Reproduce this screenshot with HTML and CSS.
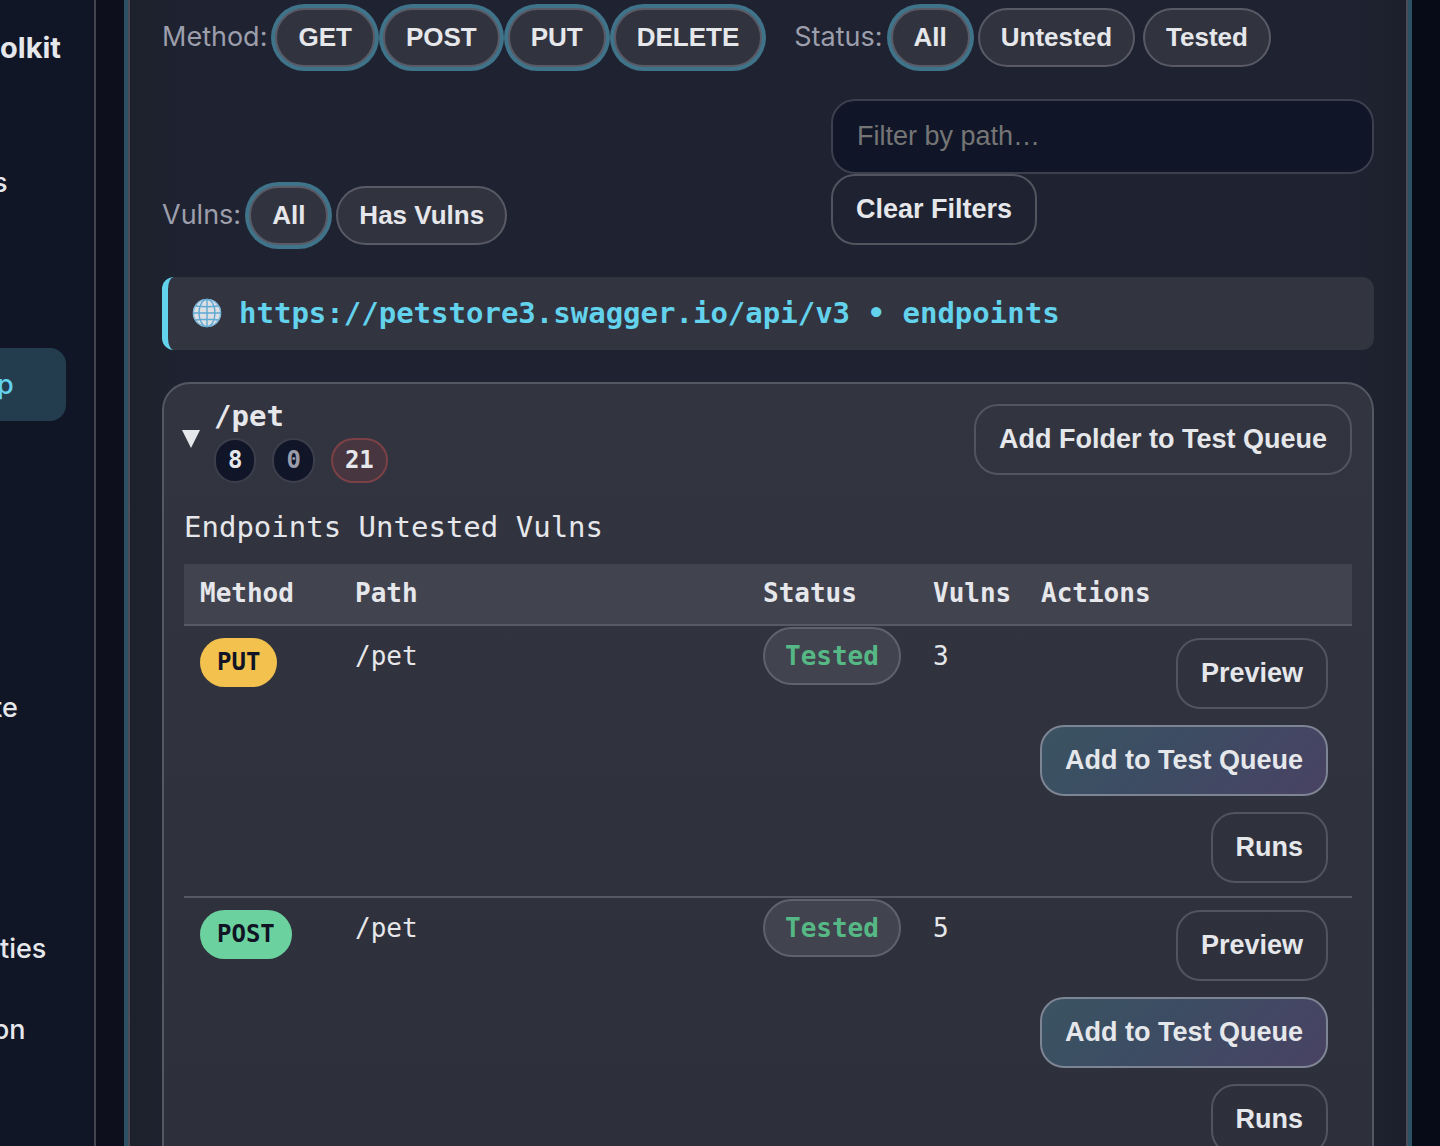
FILE: index.html
```html
<!DOCTYPE html>
<html lang="en">
<head>
<meta charset="utf-8">
<meta name="viewport" content="width=device-width, initial-scale=1">
<title>Endpoints</title>
<link rel="stylesheet" href="styles.css">
</head>
<body>
<div class="shell">
  <nav class="sidebar">
    <div class="brand">olkit</div>
    <div class="nav-group nav-group-first"><a class="nav-link clipped" href="#">s</a></div>
    <div class="nav-group nav-group-second"><a class="nav-link active" href="#">p</a></div>
    <div class="nav-group nav-group-third"><a class="nav-link clipped" href="#">te</a></div>
    <div class="nav-group nav-group-fourth">
      <a class="nav-link" href="#">ties</a>
      <a class="nav-link clipped" href="#">on</a>
    </div>
  </nav>

  <main class="main">
    <section class="panel">
      <div class="filters">
        <div class="filter-group">
          <span class="label">Method:</span>
          <button class="pill selected" type="button">GET</button>
          <button class="pill selected" type="button">POST</button>
          <button class="pill selected" type="button">PUT</button>
          <button class="pill selected" type="button">DELETE</button>
        </div>
        <div class="filter-group filter-status">
          <span class="label">Status:</span>
          <button class="pill selected" type="button">All</button>
          <button class="pill" type="button">Untested</button>
          <button class="pill" type="button">Tested</button>
        </div>
        <div class="filter-group">
          <span class="label">Vulns:</span>
          <button class="pill selected" type="button">All</button>
          <button class="pill" type="button">Has Vulns</button>
        </div>
        <div class="search">
          <input class="search-input" type="text" placeholder="Filter by path…" aria-label="Filter by path">
          <button class="btn" type="button">Clear Filters</button>
        </div>
      </div>

      <div class="host">
        <svg class="globe" viewBox="0 0 30 30" aria-hidden="true">
          <circle cx="15" cy="15" r="14" fill="#dcdfe3"/>
          <g fill="none" stroke="#5fa9d3" stroke-width="1.4">
            <circle cx="15" cy="15" r="13.6" stroke="#7db9dc"/>
            <ellipse cx="15" cy="15" rx="8" ry="13.6"/>
            <path d="M15 1v28M1 15h28M3.500 8Q15 9.500 26.500 8M3.500 22Q15 20.500 26.500 22"/>
          </g>
        </svg>
        <span>https://petstore3.swagger.io/api/v3 • endpoints</span>
      </div>

      <section class="folder">
        <header class="folder-head">
          <button class="toggle" type="button" aria-label="Collapse folder"><svg viewBox="0 0 18 18" aria-hidden="true"><path d="M0 0h18L9 18z" fill="#e6e7eb"/></svg></button>
          <div class="folder-info">
            <h2 class="folder-title">/pet</h2>
            <div class="counts">
              <span class="count">8</span>
              <span class="count muted">0</span>
              <span class="count danger">21</span>
            </div>
          </div>
          <button class="btn" type="button">Add Folder to Test Queue</button>
        </header>
        <p class="legend">Endpoints Untested Vulns</p>
        <table class="endpoints">
          <colgroup><col class="col-method"><col><col class="col-status"><col class="col-vulns"><col class="col-actions"></colgroup>
          <thead>
            <tr><th>Method</th><th>Path</th><th>Status</th><th>Vulns</th><th>Actions</th></tr>
          </thead>
          <tbody>
            <tr>
              <td><span class="method put">PUT</span></td>
              <td>/pet</td>
              <td><span class="status">Tested</span></td>
              <td>3</td>
              <td><div class="actions">
                <button class="btn" type="button">Preview</button>
                <button class="btn primary" type="button">Add to Test Queue</button>
                <button class="btn" type="button">Runs</button>
              </div></td>
            </tr>
            <tr>
              <td><span class="method post">POST</span></td>
              <td>/pet</td>
              <td><span class="status">Tested</span></td>
              <td>5</td>
              <td><div class="actions">
                <button class="btn" type="button">Preview</button>
                <button class="btn primary" type="button">Add to Test Queue</button>
                <button class="btn" type="button">Runs</button>
              </div></td>
            </tr>
          </tbody>
        </table>
      </section>
    </section>
  </main>
</div>
</body>
</html>
```
FILE: styles.css
```css
* { box-sizing: border-box; }

body {
  margin: 0;
  background: linear-gradient(90deg, #0d101c, #070b18);
  color: #e6e7eb;
  font-family: Inter, "Liberation Sans", sans-serif;
  font-size: 27px;
}

button, input { font-family: "Liberation Sans", Arial, sans-serif; color: inherit; margin: 0; }

.shell { display: flex; height: 100vh; overflow: hidden; }

.sidebar {
  flex: 0 0 96px;
  border-right: 2px solid #42444f;
  background: #111627;
  overflow: hidden;
}
.brand { padding: 30px 0; line-height: 36px; font-size: 29px; font-weight: 700; }
.nav-group { display: grid; gap: 8px; }
.nav-group-first { margin-top: 50px; }
.nav-group-second { margin-top: 129px; }
.nav-group-third { margin-top: 250px; }
.nav-group-fourth { margin-top: 168px; }
.nav-link {
  margin-right: 28px;
  padding: 20px 0;
  border-radius: 0 16px 16px 0;
  line-height: 33px;
  font-weight: 500;
  color: inherit;
  text-decoration: none;
}
.nav-link.clipped { text-indent: -7px; }
.nav-link.active { background: #233c4e; color: #63d2ec; text-indent: -3px; }

.main { flex: 1; min-width: 0; padding: 0 32px; }

.panel {
  min-height: 100%;
  padding: 8px 32px 32px;
  border: solid #4b4c58;
  border-width: 0 2px;
  box-shadow: 0 0 0 4px #2b5163;
  background: linear-gradient(90deg, #1d212b, #1f2230 48px, #1f2230 calc(100% - 48px), #1c1f2b);
}

.filters { display: flex; flex-wrap: wrap; align-items: flex-end; gap: 32px; }
.filter-group { display: flex; align-items: center; gap: 8px; }
.filter-status { flex: 1; }
.label { padding-bottom: 2px; color: #9c9eac; }
.pill {
  height: 59px;
  padding: 0 21px;
  border: 2px solid #595a66;
  border-radius: 30px;
  background: #31343f;
  font-size: 26px;
  font-weight: 700;
  white-space: nowrap;
}
.pill.selected { box-shadow: 0 0 0 4px #3f7389; }

.search { width: 543px; margin-left: auto; }
.search-input {
  display: block;
  width: 100%;
  height: 75px;
  padding: 0 24px;
  border: 2px solid #3c3f4d;
  border-radius: 24px;
  background: #101528;
  font-size: 27px;
}
.search-input::placeholder { color: #757575; opacity: 1; }

.btn {
  height: 71px;
  padding: 0 23px;
  border: 2px solid #52545f;
  border-radius: 24px;
  background: transparent;
  font-size: 27px;
  font-weight: 700;
  white-space: nowrap;
}
.btn.primary {
  border-color: #7d8493;
  background: linear-gradient(135deg, #3a5361, #3c4d63 40%, #494263);
}

.host {
  display: flex;
  align-items: center;
  gap: 17px;
  height: 73px;
  margin: 32px 0;
  padding: 0 24px 2px;
  border-left: 6px solid #63d2ec;
  border-radius: 12px;
  background: #32343f;
  color: #63d2ec;
  font: 700 29px "DejaVu Sans Mono", monospace;
  white-space: nowrap;
}
.globe { flex: none; width: 30px; height: 30px; }

.folder {
  padding: 11px 20px 20px;
  border: 2px solid #555763;
  border-radius: 28px;
  background: linear-gradient(#32343f, #2d303b);
  font-family: "DejaVu Sans Mono", monospace;
}
.folder-head { display: flex; align-items: center; gap: 16px; }
.toggle { flex: none; width: 14px; height: 18px; padding: 0; border: 0; background: none; }
.toggle svg { display: block; width: 18px; height: 18px; margin-left: -2px; }
.folder-info { flex: 1; }
.folder-title { margin: 0; font-size: 29px; line-height: 43px; }
.counts { display: flex; gap: 16px; }
.count {
  height: 45px;
  padding: 0 12px;
  border: 2px solid #3c3e4b;
  border-radius: 23px;
  background: #101527;
  font-size: 24px;
  font-weight: 700;
  line-height: 41px;
}
.count.muted { color: #9a9cab; }
.count.danger { border-color: #7b4146; background: #473640; }
.legend { margin: 23px 0 15px; font-size: 29px; line-height: 43px; }

.endpoints { width: 100%; table-layout: fixed; border-collapse: separate; border-spacing: 0; font-size: 26px; }
.col-method { width: 155px; }
.col-status { width: 170px; }
.col-vulns { width: 108px; }
.col-actions { width: 327px; }
.endpoints th {
  padding: 9px 16px 11px;
  border-bottom: 2px solid #575965;
  background: #41434f;
  text-align: left;
  line-height: 40px;
  white-space: nowrap;
}
.endpoints td {
  height: 272px;
  padding: 12px 24px 12px 16px;
  border-bottom: 2px solid #555763;
  vertical-align: top;
  line-height: 36px;
}
.method {
  display: inline-block;
  padding: 0 17px;
  border-radius: 25px;
  color: #101424;
  font-size: 24px;
  font-weight: 700;
  line-height: 49px;
}
.method.put { background: #f2c14e; }
.method.post { background: #6bd19f; }
.status {
  display: inline-block;
  margin: -11px 0;
  padding: 0 20px;
  border: 2px solid #5f616d;
  border-radius: 30px;
  background: #41434f;
  color: #56b985;
  font-weight: 700;
  line-height: 54px;
}
.actions { display: flex; flex-direction: column; align-items: flex-end; gap: 16px; }
```
